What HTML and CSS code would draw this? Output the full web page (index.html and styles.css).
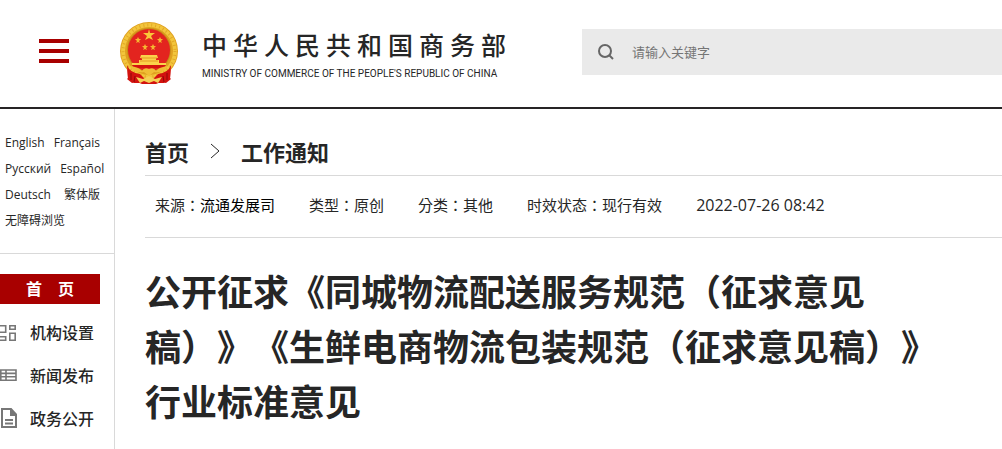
FILE: index.html
```html
<!DOCTYPE html>
<html lang="zh-CN">
<head>
  <meta charset="UTF-8">
  <meta name="viewport" content="width=device-width, initial-scale=1.0">
  <title>中华人民共和国商务部</title>
  <link rel="stylesheet" href="styles.css">
</head>
<body>
  <header class="header">
    <button class="menu-btn" type="button" aria-label="菜单">
      <span></span><span></span><span></span>
    </button>
    <a class="logo" href="#">
      <svg class="emblem" viewBox="0 0 58 62" aria-hidden="true">
        <path d="M7 42L21 50H37L51 42L50 56L51 57L46 61L41 60L36 62H22L17 60L12 61L7 57L8 56Z" fill="#d3120f"/>
        <circle cx="29" cy="29" r="29" fill="#dfa01f"/>
        <circle cx="29" cy="29" r="26" fill="none" stroke="#f3c63c" stroke-width="4"/>
        <circle cx="29" cy="29" r="26" fill="none" stroke="#e2a828" stroke-width="3" stroke-dasharray="1 3"/>
        <circle cx="29" cy="28" r="22" fill="#c98a17"/>
        <circle cx="29" cy="28" r="21" fill="#e3241f"/>
        <path d="M29 7L30 11L35 11L31 14L33 18L29 16L25 18L27 14L23 11L28 11Z" fill="#f9c93a"/>
        <g fill="#f5b731">
          <path id="star" d="M18 15L19 17L21 17L19 19L20 21L18 20L16 21L17 19L15 17L17 17Z"/>
          <use href="#star" x="22"/>
          <use href="#star" x="7" y="7"/>
          <use href="#star" x="15" y="7"/>
        </g>
        <path d="M21 33H37L38 36H36V38H39V41H46V43H12V41H19V38H22V36H20Z" fill="#fbd24a"/>
        <path d="M21 36H37M20 39H38" stroke="#e59a22" stroke-width="1"/>
        <path d="M12 43H46L44 46H14Z" fill="#d3120f"/>
        <path d="M7 43Q10 51 20 52L25 57L19 61H14L12 59L8 57Z M51 43Q48 51 38 52L33 57L39 61H44L46 59L50 57Z" fill="#d3120f"/>
        <path d="M10 44Q19 45 22 49Q24 45 29 47Q34 45 36 49Q39 45 48 44L44 49Q38 51 34 50L29 54L24 50Q20 51 14 49Z" fill="#f0bd35"/>
        <path d="M16 55L23 57L29 54L35 57L42 55L38 61L34 59L29 61L24 59L20 61Z" fill="#f5d155"/>
        <path d="M11 51V58M15 54L14 60M47 51V58M43 54L44 60" stroke="#8f0808" stroke-width="1"/>
      </svg>
      <span class="logo-text">
        <span class="logo-cn">中华人民共和国商务部</span>
        <span class="logo-en">MINISTRY OF COMMERCE OF THE PEOPLE'S REPUBLIC OF CHINA</span>
      </span>
    </a>
    <form class="search" role="search">
      <button class="search-btn" type="submit" aria-label="搜索">
        <svg viewBox="0 0 16 16" aria-hidden="true">
          <circle cx="7" cy="7" r="6"/>
          <path d="M11 11L15 15"/>
        </svg>
      </button>
      <input type="text" placeholder="请输入关键字" aria-label="请输入关键字">
    </form>
  </header>

  <div class="container">
    <aside class="sidebar">
      <div class="langs">
        <div><a href="#">English</a><a href="#">Français</a></div>
        <div><a href="#">Русский</a><a href="#">Español</a></div>
        <div class="wide"><a href="#">Deutsch</a><a href="#">繁体版</a></div>
        <div><a href="#">无障碍浏览</a></div>
      </div>
      <nav class="nav">
        <a class="nav-home" href="#"><span>首</span><span>页</span></a>
        <a class="nav-item" href="#">
          <svg viewBox="0 0 17 20" aria-hidden="true">
            <path class="thin" d="M-1 3.8H5.7V10.2H-1ZM9.8 3.8H15.2V7.2H9.8ZM-1 14.8H5.7V18.2H-1ZM9.8 11.2H15.2V18.2H9.8Z"/>
          </svg>
          机构设置
        </a>
        <a class="nav-item" href="#">
          <svg viewBox="0 0 17 20" aria-hidden="true">
            <path class="thin" d="M.8 5H16V15.2H.8ZM1 8.4H16M1 11.8H16M6 5V15"/>
          </svg>
          新闻发布
        </a>
        <a class="nav-item" href="#">
          <svg viewBox="0 0 17 20" aria-hidden="true">
            <path d="M2 1H11L16 6.5V19H2ZM5 12H13M5 15.5H13"/>
            <path class="fold" d="M10 1V8H16V6Z"/>
          </svg>
          政务公开
        </a>
      </nav>
    </aside>

    <main class="content">
      <div class="crumbs">
        <a href="#">首页</a>
        <svg viewBox="0 0 10 16" aria-hidden="true"><path d="M1 1L9 8L1 15"/></svg>
        <a href="#">工作通知</a>
      </div>
      <div class="info">
        <span><span class="label" lang="zh-TW">来源：</span><a href="#">流通发展司</a></span>
        <span><span class="label" lang="zh-TW">类型：</span>原创</span>
        <span><span class="label" lang="zh-TW">分类：</span>其他</span>
        <span><span class="label" lang="zh-TW">时效状态：</span>现行有效</span>
        <time>2022-07-26 08:42</time>
      </div>
      <h1>公开征求《同城物流配送服务规范（征求意见稿）》《生鲜电商物流包装规范（征求意见稿）》行业标准意见</h1>
    </main>
  </div>
</body>
</html>
```

FILE: styles.css
```css
* {
  box-sizing: border-box;
}
body {
  margin: 0;
  font-family: "Open Sans", "Noto Sans CJK SC", sans-serif;
  color: #262626;
  background: #fff;
}
a {
  color: inherit;
  text-decoration: none;
}
button {
  border: none;
  padding: 0;
  background: none;
  cursor: pointer;
}

/* header */
.header {
  display: flex;
  align-items: center;
  height: 109px;
  padding-left: 39px;
  border-bottom: 2px solid #262425;
}
.menu-btn {
  display: flex;
  flex-direction: column;
  gap: 6px;
  width: 30px;
  margin-bottom: 5px;
}
.menu-btn span {
  height: 4px;
  background: #a80000;
}
.logo {
  display: flex;
  gap: 24px;
  margin-left: 51px;
  margin-bottom: 2px;
}
.emblem {
  width: 58px;
  height: 62px;
}
.logo-text {
  display: flex;
  flex-direction: column;
  gap: 4px;
  padding-top: 4px;
}
.logo-cn {
  font-family: "Noto Sans CJK SC", sans-serif;
  font-size: 25px;
  font-weight: 500;
  line-height: 36px;
  letter-spacing: 6px;
  white-space: nowrap;
}
.logo-en {
  font-family: Roboto, sans-serif;
  font-size: 10px;
  line-height: 16px;
  white-space: nowrap;
}
.search {
  display: flex;
  align-items: center;
  flex: 1;
  height: 46px;
  margin-left: 70px;
  margin-bottom: 3px;
  padding-left: 16px;
  background: #eaeaea;
}
.search-btn svg {
  display: block;
  width: 16px;
  height: 16px;
  fill: none;
  stroke: #666;
  stroke-width: 2;
}
.search input {
  flex: 1;
  min-width: 0;
  height: 46px;
  padding: 0 18px;
  border: none;
  outline: none;
  background: none;
  font-family: inherit;
  font-size: 13px;
}
.search input::placeholder {
  color: #757575;
}

/* sidebar */
.container {
  display: flex;
  min-height: calc(100vh - 109px);
}
.sidebar {
  flex: 0 0 115px;
  border-right: 1px solid #d9d9d9;
}
.langs {
  padding: 21px 0 19px 5px;
  border-bottom: 1px solid #d9d9d9;
  font-size: 12px;
  line-height: 26px;
  white-space: nowrap;
}
.langs div {
  display: flex;
  gap: 9px;
  height: 26px;
}
.langs .wide {
  gap: 13px;
}
.nav {
  padding-top: 20px;
  font-size: 16px;
  font-weight: 500;
}
.nav-home {
  display: flex;
  justify-content: center;
  gap: 16px;
  width: 100px;
  margin-bottom: 6px;
  background: #a80000;
  color: #fff;
  font-weight: bold;
  line-height: 30px;
}
.nav-item {
  display: flex;
  align-items: center;
  gap: 13px;
  height: 43px;
}
.nav-item svg {
  width: 17px;
  height: 20px;
  fill: none;
  stroke: #777;
  stroke-width: 2;
}
.nav-item .thin {
  stroke-width: 1.6;
}
.nav-item .fold {
  fill: #777;
  stroke: none;
}

/* content */
.content {
  flex: 1;
  padding-left: 30px;
}
.crumbs {
  display: flex;
  align-items: center;
  gap: 21px;
  height: 67px;
  padding-top: 18px;
  border-bottom: 1px solid #d9d9d9;
  font-size: 22px;
  font-weight: bold;
}
.crumbs svg {
  width: 10px;
  height: 16px;
  fill: none;
  stroke: #262626;
}
.info {
  display: flex;
  flex-wrap: wrap;
  gap: 0 34px;
  padding: 0 0 3px 10px;
  border-bottom: 1px solid #d9d9d9;
  font-size: 15px;
  line-height: 58px;
}
.info a {
  color: #000;
}
.info time {
  font-size: 16px;
}
/* the TC face centres the full-width colon */
.info .label {
  font-family: "Noto Sans CJK TC", sans-serif;
}
h1 {
  max-width: 800px;
  margin: 27px 0 0;
  font-size: 36px;
  line-height: 55px;
  text-spacing-trim: space-all;
}
```
